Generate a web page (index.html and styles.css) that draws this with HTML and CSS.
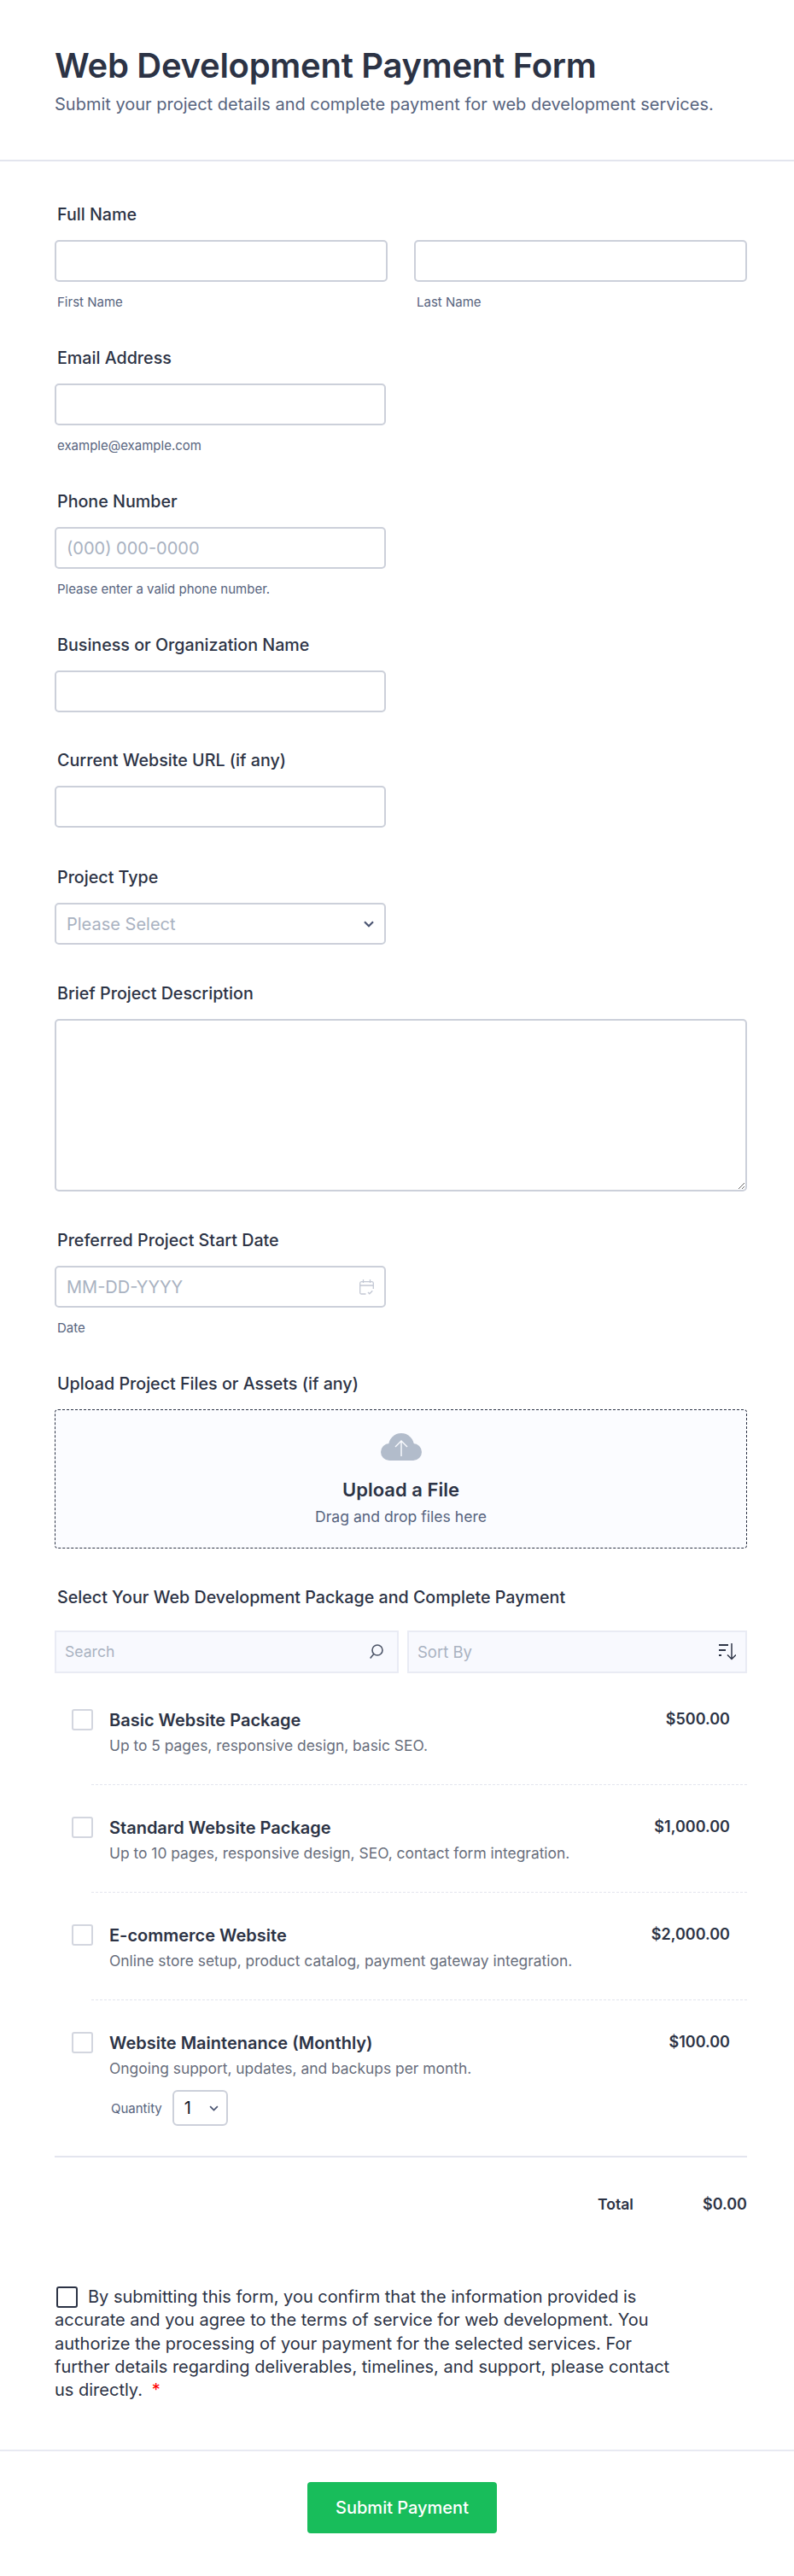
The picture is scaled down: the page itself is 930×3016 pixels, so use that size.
FILE: index.html
```html
<!DOCTYPE html>
<html lang="en">
<head>
<meta charset="utf-8">
<title>Web Development Payment Form</title>
<link rel="stylesheet" href="styles.css">
</head>
<body>
<form class="form">
  <header class="head">
    <h1 class="title">Web Development Payment Form</h1>
    <p class="subtitle">Submit your project details and complete payment for web development services.</p>
  </header>
  <div class="fields">
    <div class="field">
      <label class="label">Full Name</label>
      <div class="name-row">
        <div class="name-col"><input class="input" type="text"><span class="sub">First Name</span></div>
        <div class="name-col"><input class="input" type="text"><span class="sub">Last Name</span></div>
      </div>
    </div>
    <div class="field">
      <label class="label">Email Address</label>
      <input class="input short" type="text">
      <span class="sub">example@example.com</span>
    </div>
    <div class="field">
      <label class="label">Phone Number</label>
      <input class="input short" type="text" placeholder="(000) 000-0000">
      <span class="sub">Please enter a valid phone number.</span>
    </div>
    <div class="field">
      <label class="label">Business or Organization Name</label>
      <input class="input short" type="text">
    </div>
    <div class="field gap-lg">
      <label class="label">Current Website URL (if any)</label>
      <input class="input short" type="text">
    </div>
    <div class="field gap-md">
      <label class="label">Project Type</label>
      <div class="input short box">
        <span class="ph">Please Select</span>
        <svg class="chev" viewBox="0 0 12 8" width="12" height="8"><path d="M1 1.300 6 6.300l5-5" fill="none" stroke="#4b5572" stroke-width="2.200"/></svg>
      </div>
    </div>
    <div class="field gap-md">
      <label class="label">Brief Project Description</label>
      <textarea class="area"></textarea>
    </div>
    <div class="field">
      <label class="label">Preferred Project Start Date</label>
      <div class="input short box">
        <span class="ph">MM-DD-YYYY</span>
        <svg class="cal" viewBox="0 0 17 18" width="17" height="18" fill="none" stroke="#c3c8d4" stroke-width="1.300"><path d="M7.500 17H2.200A1.600 1.600 0 0 1 .7 15.400V4.200A1.600 1.600 0 0 1 2.200 2.600h12.600a1.600 1.600 0 0 1 1.500 1.600V11M.7 7h15.600M4.500 0v4M12.500 0v4M10 15l1.800 1.800 3.500-3.500"/></svg>
      </div>
      <span class="sub">Date</span>
    </div>
    <div class="field gap-md">
      <label class="label">Upload Project Files or Assets (if any)</label>
      <div class="upload">
        <svg class="cloud" viewBox="0 0 48 32" width="48" height="32"><circle cx="24" cy="15" r="15" fill="#b2bccb"/><circle cx="10" cy="22" r="10" fill="#b2bccb"/><circle cx="38" cy="22" r="10" fill="#b2bccb"/><rect x="10" y="20" width="28" height="12" fill="#b2bccb"/><path d="M24 27V9M17 16l7-7 7 7" fill="none" stroke="#fbfcff" stroke-width="1.400"/></svg>
        <strong class="up-title">Upload a File</strong>
        <span class="up-sub">Drag and drop files here</span>
      </div>
    </div>
    <div class="field products">
      <label class="label tight">Select Your Web Development Package and Complete Payment</label>
      <div class="tools">
        <div class="tool search"><span class="tool-ph small">Search</span>
          <svg viewBox="0 0 16 18" width="16" height="18" fill="none" stroke="#4d5568" stroke-width="1.600"><circle cx="9" cy="7" r="6"/><path d="M4.800 11.500.7 16.500"/></svg>
        </div>
        <div class="tool"><span class="tool-ph">Sort By</span>
          <svg viewBox="0 0 20 20" width="20" height="20" fill="none" stroke="#2f3648" stroke-width="2.200"><path d="M0 2h11M0 8h8M0 14h3"/><path d="M15 0v18.500M10 13.500l5 5 5-5" stroke-width="1.500"/></svg>
        </div>
      </div>
      <div class="item">
        <span class="check"></span>
        <div class="item-main"><div class="item-name">Basic Website Package</div><div class="item-desc">Up to 5 pages, responsive design, basic SEO.</div></div>
        <div class="price">$500.00</div>
      </div>
      <div class="item">
        <span class="check"></span>
        <div class="item-main"><div class="item-name">Standard Website Package</div><div class="item-desc">Up to 10 pages, responsive design, SEO, contact form integration.</div></div>
        <div class="price">$1,000.00</div>
      </div>
      <div class="item">
        <span class="check"></span>
        <div class="item-main"><div class="item-name">E-commerce Website</div><div class="item-desc">Online store setup, product catalog, payment gateway integration.</div></div>
        <div class="price">$2,000.00</div>
      </div>
      <div class="item last">
        <span class="check"></span>
        <div class="item-main">
          <div class="item-name">Website Maintenance (Monthly)</div>
          <div class="item-desc">Ongoing support, updates, and backups per month.</div>
          <div class="qty"><span class="qty-label">Quantity</span>
            <div class="qty-box"><span>1</span><svg viewBox="0 0 12 8" width="11" height="7"><path d="M1 1.300 6 6.300l5-5" fill="none" stroke="#4b5572" stroke-width="2"/></svg></div>
          </div>
        </div>
        <div class="price">$100.00</div>
      </div>
      <div class="total"><span class="total-label">Total</span><span class="total-val">$0.00</span></div>
    </div>
    <div class="consent"><span class="consent-box"></span>By submitting this form, you confirm that the information provided is accurate and you agree to the terms of service for web development. You authorize the processing of your payment for the selected services. For further details regarding deliverables, timelines, and support, please contact us directly. <span class="req">*</span></div>
  </div>
  <footer class="foot"><button class="submit" type="button">Submit Payment</button></footer>
</form>
</body>
</html>
```

FILE: styles.css
```css
* { box-sizing: border-box; }
html, body { margin: 0; padding: 0; background: #fff; }
body { font-family: Inter, "Liberation Sans", sans-serif; color: #2c3345; }
.form { width: 930px; height: 3016px; }
.head { height: 189px; padding: 51px 64px 0; border-bottom: 2px solid #e3e5ee; }
.title { margin: 0; font-size: 40px; line-height: 52px; font-weight: 600; letter-spacing: -0.28px; color: #2c3345; }
.subtitle { margin: 5px 0 0; font-size: 20px; line-height: 28px; color: #57647e; }
.fields { padding: 52px 55px 0 64px; }
.field { display: flex; flex-direction: column; align-items: flex-start; margin-bottom: 46px; }
.gap-md { margin-bottom: 47px; }
.gap-lg { margin-bottom: 48px; }
.label { font-size: 19.7px; line-height: 20px; font-weight: 500; color: #2c3345; margin: 0 0 20px 3px; }
.label.tight { margin-bottom: 29px; }
.name-row { display: flex; gap: 31px; width: 811px; }
.name-col { flex: 1; display: flex; flex-direction: column; }
.input { width: 100%; height: 49px; border: 2px solid #ccd0da; border-radius: 5px; background: #fff; padding: 0 12px; font: 20px Inter, sans-serif; outline: none; }
.input::placeholder { color: #a9b2c1; }
.short { width: 388px; }
.box { display: flex; align-items: center; justify-content: space-between; }
.ph { font-size: 20px; color: #a9b2c1; }
.sub { font-size: 15px; line-height: 18px; color: #57647e; margin: 15px 0 0 3px; }
.area { display: block; width: 811px; height: 202px; border: 2px solid #ccd0da; border-radius: 5px; outline: none; resize: vertical; }
.upload { width: 811px; height: 163px; background: #fbfcff; border: 1px dashed #2c3345; border-radius: 4px; display: flex; flex-direction: column; align-items: center; padding-top: 27px; }
.up-title { font-size: 22px; line-height: 28px; font-weight: 600; margin-top: 20px; }
.up-sub { font-size: 17.6px; line-height: 24px; color: #57647e; margin-top: 6px; }
.tools { display: flex; gap: 10px; width: 811px; }
.tool { flex: 1 1 0; height: 50px; background: #f8f9fe; border: 2px solid #e9ebf4; display: flex; align-items: center; justify-content: space-between; padding: 0 11px 0 10px; }
.tool.search { padding-right: 16px; }
.tool-ph { font-size: 18.5px; color: #a9b2c1; }
.tool-ph.small { font-size: 17.6px; margin-top: -1px; }
.products { margin-bottom: 0; }
.item { display: flex; width: 811px; padding: 0 20px; height: 126px; position: relative; }
.tools + .item { margin-top: 42px; }
.item::after { content: ""; position: absolute; left: 43px; right: 0; top: 88px; border-top: 1px dashed #e3e5ee; }
.item.last { height: 147px; border-bottom: 2px solid #e3e5ee; }
.item.last::after { display: none; }
.check { width: 25px; height: 25px; border: 2px solid #d3d6df; border-radius: 3px; flex: none; margin-right: 19px; }
.item-main { flex: 1; }
.item-name { font-size: 20px; line-height: 24px; font-weight: 600; color: #2c3345; margin-top: 1px; }
.item-desc { font-size: 17.4px; line-height: 24px; color: #686e7c; margin-top: 6px; }
.price { font-size: 18px; line-height: 24px; font-weight: 600; color: #2c3345; }
.qty { display: flex; align-items: center; gap: 12px; margin: 13px 0 0 2px; }
.qty-label { font-size: 15px; color: #57647e; }
.qty-box { width: 65px; height: 42px; border: 2px solid #ccd0da; border-radius: 6px; display: flex; align-items: center; justify-content: space-between; padding: 0 9px 0 12px; font-size: 20px; color: #111827; }
.total { display: flex; justify-content: flex-end; width: 811px; margin-top: 45px; line-height: 20px; gap: 81px; }
.total-label { font-size: 17.6px; font-weight: 600; }
.total-val { font-size: 18px; font-weight: 600; }
.consent { width: 725px; margin-top: 85px; font-size: 20px; line-height: 27.3px; color: #2c3345; }
.consent-box { display: inline-block; width: 25px; height: 25px; border: 2px solid #2c3345; border-radius: 3px; vertical-align: -6px; margin: 0 12px 0 2px; }
.req { color: #f00; margin-left: 5px; }
.foot { border-top: 2px solid #e8eaf2; margin-top: 56px; padding: 36px 0 0 12px; display: flex; justify-content: center; }
.submit { width: 222px; height: 60px; background: #18bd5b; border: 0; border-radius: 4px; color: #fff; font: 500 20px Inter, sans-serif; }
```
